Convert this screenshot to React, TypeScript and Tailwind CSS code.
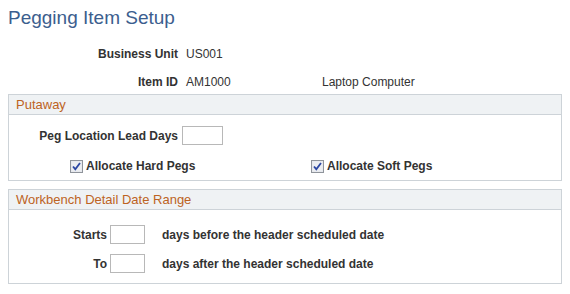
import React from "react";

const Checked: React.FC = () => (
  <svg width="13" height="13" viewBox="0 0 13 13" className="shrink-0">
    <rect x="0.5" y="0.5" width="12" height="12" fill="#e3e5ea" stroke="#8f949b" />
    <rect x="1.5" y="1.5" width="10" height="10" fill="#eceef1" />
    <path d="M3 6.5 L5.3 9.2 L10 3" fill="none" stroke="#2c47a3" strokeWidth="1.8" />
  </svg>
);

const GroupBox: React.FC<{ title: string; children: React.ReactNode; className?: string }> = ({ title, children, className }) => (
  <div className={`mx-[8px] border border-[#cdd3d8] ${className ?? ""}`}>
    <div className="h-[20px] border-b border-[#cdd3d8] bg-[#eff2f4] pl-[7px] text-[13px] leading-[20px] text-[#bd6323]">
      {title}
    </div>
    {children}
  </div>
);

const TextBox: React.FC<{ w: string }> = ({ w }) => (
  <div className={`${w} h-[19px] border border-[#b8b8b8] bg-white`} />
);

export default function App() {
  return (
    <div className="h-[294px] w-[570px] bg-white font-['Liberation_Sans',Arial,sans-serif] text-[12px] text-[#333]">
      <h1 className="pl-[8px] pt-[6px] text-[19px] leading-[24px] text-[#3c5e8e]">Pegging Item Setup</h1>

      <div className="mt-[16px] flex h-[16px] items-center leading-[16px]">
        <span className="w-[178px] text-right font-bold">Business Unit</span>
        <span className="ml-[8px]">US001</span>
      </div>
      <div className="mt-[12px] flex h-[16px] items-center leading-[16px]">
        <span className="w-[178px] text-right font-bold">Item ID</span>
        <span className="ml-[8px] w-[136px]">AM1000</span>
        <span>Laptop Computer</span>
      </div>

      <GroupBox title="Putaway" className="mt-[4px] h-[87px]">
        <div className="mt-[11px] flex items-center">
          <span className="w-[169px] text-right font-bold">Peg Location Lead Days</span>
          <div className="ml-[4px]">
            <TextBox w="w-[41px]" />
          </div>
        </div>
        <div className="mt-[12px] flex items-center font-bold">
          <div className="ml-[61px] flex w-[241px] items-center gap-[3px]">
            <Checked />
            <span>Allocate Hard Pegs</span>
          </div>
          <div className="flex items-center gap-[3px]">
            <Checked />
            <span>Allocate Soft Pegs</span>
          </div>
        </div>
      </GroupBox>

      <GroupBox title="Workbench Detail Date Range" className="mt-[8px] h-[95px]">
        <div className="mt-[15px] flex items-center">
          <span className="w-[98px] text-right font-bold">Starts</span>
          <div className="ml-[3px]">
            <TextBox w="w-[35px]" />
          </div>
          <span className="ml-[17px] font-bold">days before the header scheduled date</span>
        </div>
        <div className="mt-[10px] flex items-center">
          <span className="w-[98px] text-right font-bold">To</span>
          <div className="ml-[3px]">
            <TextBox w="w-[35px]" />
          </div>
          <span className="ml-[17px] font-bold">days after the header scheduled date</span>
        </div>
      </GroupBox>
    </div>
  );
}
